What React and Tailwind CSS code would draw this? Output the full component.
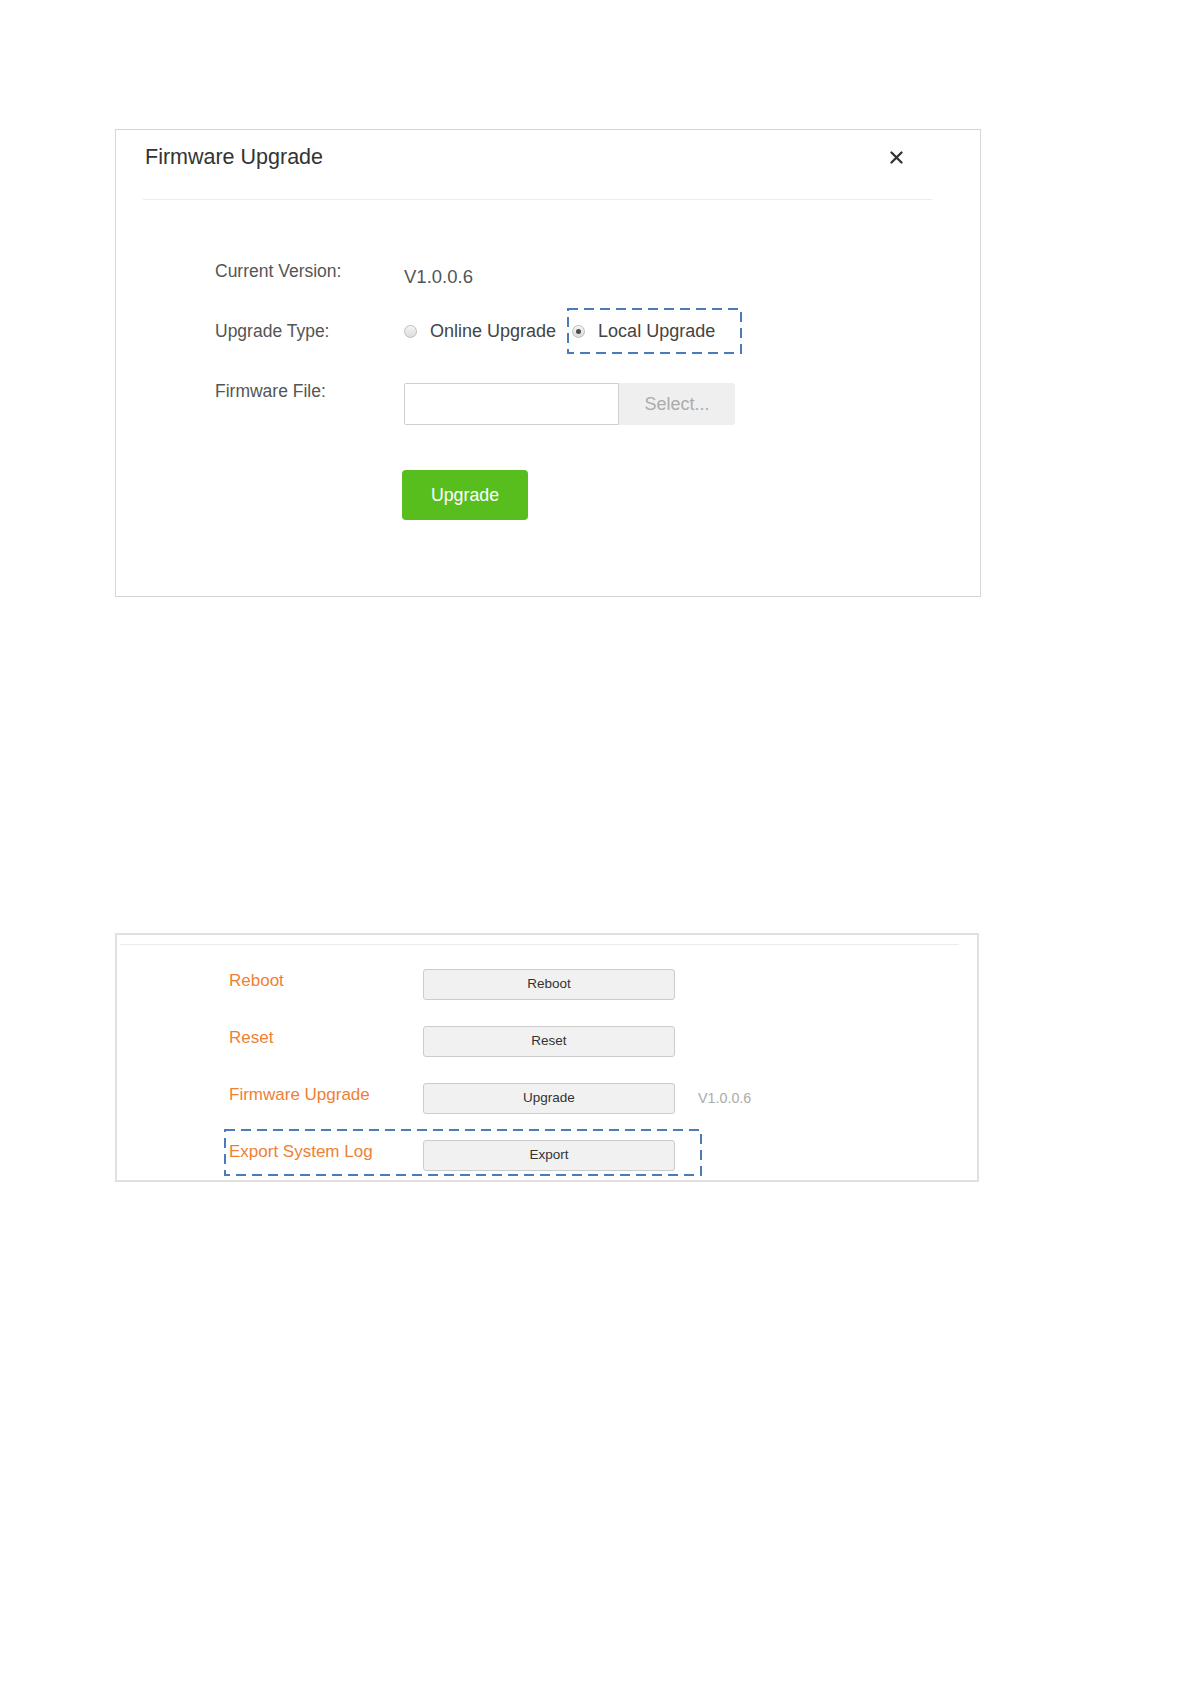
import React from "react";

const FONT = { fontFamily: '"Liberation Sans", Arial, sans-serif' };

function Radio({ checked }) {
  return (
    <div className="w-[13px] h-[13px] rounded-full border border-[#bdbdbd] bg-gradient-to-b from-[#f4f4f4] to-[#dcdcdc] flex items-center justify-center shrink-0">
      {checked && <div className="w-[5px] h-[5px] rounded-full bg-[#4d4d4d]" />}
    </div>
  );
}

function DashedFrame({ w, h }) {
  return (
    <svg
      className="absolute left-0 top-0 pointer-events-none"
      width={w}
      height={h}
      viewBox={`0 0 ${w} ${h}`}
    >
      <rect
        x="1"
        y="1"
        width={w - 2}
        height={h - 2}
        fill="none"
        stroke="#4b7bb8"
        strokeWidth="2"
        strokeDasharray="10 6"
      />
    </svg>
  );
}

function GrayButton({ children }) {
  return (
    <div className="w-[252px] h-[31px] shrink-0 rounded-[3px] border border-[#cccccc] bg-[#f1f1f1] flex items-center justify-center text-[13.5px] text-[#333]">
      {children}
    </div>
  );
}

function MaintRow({ label, btn, extra, className = "" }) {
  return (
    <div className={"flex items-start " + className}>
      <div className="w-[194px] shrink-0 mt-[2px] text-[17px] leading-[20px] text-[#ef7f34]">
        {label}
      </div>
      <GrayButton>{btn}</GrayButton>
      {extra && (
        <div className="ml-[23px] self-center text-[14.3px] text-[#ababab]">{extra}</div>
      )}
    </div>
  );
}

export default function App() {
  return (
    <div className="min-h-[1684px] bg-white pt-[129px] pl-[115px]" style={FONT}>
      {/* Panel 1: Firmware Upgrade dialog */}
      <div className="w-[866px] h-[468px] border border-[#d6d6d6] bg-white">
        <div className="ml-[27px] mr-[48px] pt-[15px] pb-[30px] border-b border-[#ececec] flex items-center justify-between">
          <div className="pl-[2px] text-[21.5px] leading-[24px] text-[#333]">Firmware Upgrade</div>
          <svg className="mr-[29px]" width="13" height="13" viewBox="0 0 13 13">
            <path d="M1.5 1.5 L11.5 11.5 M11.5 1.5 L1.5 11.5" stroke="#333" strokeWidth="2.3" strokeLinecap="round" />
          </svg>
        </div>

        <div className="ml-[99px] mt-[61px]">
          {/* Current Version */}
          <div className="flex items-start">
            <div className="w-[189px] shrink-0 text-[17.5px] leading-[20px] text-[#555]">
              Current Version:
            </div>
            <div className="mt-[5px] text-[18.5px] leading-[22px] text-[#555]">V1.0.0.6</div>
          </div>

          {/* Upgrade Type */}
          <div className="mt-[20px] flex items-center h-[46px]">
            <div className="w-[189px] shrink-0 text-[17.5px] leading-[20px] text-[#555]">
              Upgrade Type:
            </div>
            <div className="flex items-center">
              <Radio />
              <span className="ml-[13px] text-[18px] leading-[22px] text-[#444]">Online Upgrade</span>
              <div className="relative ml-[11px] w-[175px] h-[46px] pl-[5px] flex items-center">
                <DashedFrame w={175} h={46} />
                <Radio checked />
                <span className="ml-[13px] text-[18px] leading-[22px] text-[#444]">Local Upgrade</span>
              </div>
            </div>
          </div>

          {/* Firmware File */}
          <div className="mt-[27px] flex items-start">
            <div className="w-[189px] shrink-0 text-[17.5px] leading-[20px] text-[#555]">
              Firmware File:
            </div>
            <div className="mt-[2px] flex">
              <div className="w-[215px] h-[42px] border border-[#cfcfcf] rounded-l-[2px] bg-white" />
              <div className="w-[116px] h-[42px] rounded-r-[3px] bg-[#efefef] flex items-center justify-center text-[18px] leading-[20px] text-[#acacac]">
                Select...
              </div>
            </div>
          </div>

          {/* Upgrade button */}
          <div className="mt-[45px] ml-[187px] w-[126px] h-[50px] rounded-[4px] bg-[#57be1d] flex items-center justify-center text-[17.8px] text-white">
            Upgrade
          </div>
        </div>
      </div>

      {/* Panel 2: maintenance */}
      <div className="mt-[336px] w-[864px] h-[249px] border-2 border-[#e0e0e0] bg-white">
        <div className="mt-[9px] ml-[3px] mr-[18px] h-px bg-[#ebebeb]" />
        <div className="pl-[112px]">
          <MaintRow className="mt-[24px]" label="Reboot" btn="Reboot" />
          <MaintRow className="mt-[26px]" label="Reset" btn="Reset" />
          <MaintRow className="mt-[26px]" label="Firmware Upgrade" btn="Upgrade" extra="V1.0.0.6" />
          <div className="relative mt-[15px] -ml-[5px] w-[478px] h-[47px] pt-[11px] pl-[5px]">
            <DashedFrame w={478} h={47} />
            <MaintRow label="Export System Log" btn="Export" />
          </div>
        </div>
      </div>
    </div>
  );
}
